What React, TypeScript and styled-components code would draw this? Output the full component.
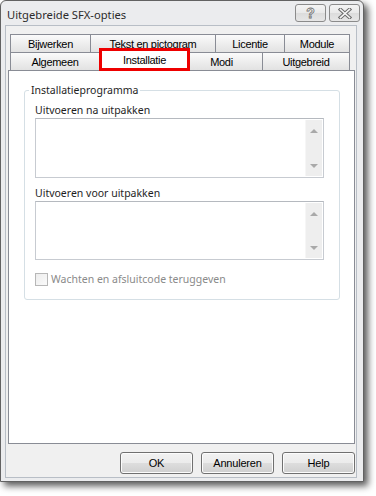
import styled, { createGlobalStyle } from 'styled-components'

const GlobalStyle = createGlobalStyle`
    html, body {
        margin: 0;
        padding: 0;
        background: #ffffff;
    }
    body {
        font-family: 'Noto Sans', 'Liberation Sans', sans-serif;
    }
`

const Page = styled.div`
    width: 376px;
    height: 496px;
    background: #ffffff;
`

const Window = styled.div`
    width: 362px;
    height: 480px;
    border: 1px solid #626262;
    border-radius: 6px 6px 0 0;
    background: #ebecee;
    box-shadow: 4px 4px 7px rgba(0, 0, 0, 0.65);
    display: flex;
    flex-direction: column;
`

const TitleBar = styled.div`
    height: 24px;
    display: flex;
    align-items: center;
    padding: 0 3px 0 6px;
`

const Title = styled.span`
    flex: 1;
    font-family: 'Noto Sans', sans-serif;
    font-size: 11.2px;
    color: #2b2b2b;
    margin-top: 2px;
`

const CaptionButtons = styled.div`
    display: flex;
    gap: 3px;
    align-self: flex-start;
    margin-top: 3px;
`

const CaptionButton = styled.div`
    width: 29px;
    height: 16px;
    border: 1px solid #8b8b8b;
    border-radius: 3px;
    background: linear-gradient(#f4f4f4, #e9e9e9 50%, #dcdcdc 51%, #e6e6e6);
    display: flex;
    align-items: center;
    justify-content: center;
`

const HelpGlyph = styled.span`
    font-family: 'Liberation Sans', sans-serif;
    font-weight: bold;
    font-size: 14px;
    line-height: 14px;
    color: #f4f4f4;
    -webkit-text-stroke: 0.8px #707070;
`

const Client = styled.div`
    margin: 0 6px 3px 4px;
    flex: 1;
    border: 1px solid #b8bec6;
    background: #f0f0f0;
    padding: 8px 1px 3px 2px;
    display: flex;
    flex-direction: column;
`

const TabRow = styled.div`
    display: flex;
    height: 18px;
    padding-left: 2px;
`

const Tab = styled.div<{ $w: number }>`
    width: ${(p) => p.$w}px;
    margin-right: -1px;
    box-sizing: border-box;
    border: 1px solid #898c95;
    border-bottom: none;
    background: linear-gradient(#fbfbfb, #eeeeee 50%, #e2e2e2);
    font-family: 'Liberation Sans', sans-serif;
    font-size: 11px;
    letter-spacing: -0.3px;
    color: #000;
    display: flex;
    align-items: center;
    justify-content: center;
    padding-top: 1px;
`

const ActiveTab = styled.div<{ $w: number }>`
    width: ${(p) => p.$w}px;
    height: 23px;
    margin: -4px -10px -1px 0;
    box-sizing: border-box;
    border: 3px solid #ee0000;
    background: #ffffff;
    font-family: 'Liberation Sans', sans-serif;
    font-size: 11px;
    letter-spacing: -0.3px;
    color: #000;
    display: flex;
    justify-content: center;
    padding-top: 3px;
    position: relative;
    z-index: 1;
`

const Panel = styled.div`
    height: 374px;
    box-sizing: border-box;
    border: 1px solid #898c95;
    background: #ffffff;
    padding: 11px 14px 0 15px;
`

const GroupBox = styled.fieldset`
    margin: 0;
    height: 218px;
    box-sizing: border-box;
    border: 1px solid #d5dfe5;
    border-radius: 3px;
    padding: 0 15px 0 10px;
`

const Legend = styled.legend`
    font-family: 'Noto Sans', sans-serif;
    font-size: 10.5px;
    line-height: 16px;
    color: #1e1e1e;
    padding: 0 2px;
    margin-left: -6px;
`

const GroupBody = styled.div`
    display: flex;
    flex-direction: column;
`

const FieldLabel = styled.div<{ $top: number }>`
    font-family: 'Noto Sans', sans-serif;
    font-size: 10.5px;
    line-height: 15px;
    color: #1e1e1e;
    margin-top: ${(p) => p.$top}px;
`

const TextBox = styled.div<{ $h: number }>`
    height: ${(p) => p.$h}px;
    box-sizing: border-box;
    border: 1px solid #c7cbd1;
    border-top-color: #b5b9bf;
    background: #ffffff;
    display: flex;
    justify-content: flex-end;
    padding: 1px;
`

const ScrollBar = styled.div`
    width: 16px;
    background: #eeeeee;
    border-left: 1px solid #f6f6f6;
    display: flex;
    flex-direction: column;
    justify-content: space-between;
    align-items: center;
    padding: 9px 0 8px;
`

const Arrow = styled.div<{ $dir: 'up' | 'down' }>`
    width: 0;
    height: 0;
    border-left: 4px solid transparent;
    border-right: 4px solid transparent;
    ${(p) =>
        p.$dir === 'up'
            ? 'border-bottom: 4px solid #a9a9a9;'
            : 'border-top: 4px solid #a9a9a9;'}
`

const CheckRow = styled.div`
    display: flex;
    align-items: center;
    gap: 3px;
    margin-top: 12px;
`

const CheckBox = styled.div`
    width: 13px;
    height: 13px;
    box-sizing: border-box;
    border: 1px solid #b7b7b7;
    background: linear-gradient(135deg, #ededed, #fafafa);
`

const CheckLabel = styled.span`
    font-family: 'Noto Sans', sans-serif;
    font-size: 10.5px;
    color: #8a8a8a;
`

const ButtonRow = styled.div`
    display: flex;
    justify-content: flex-end;
    gap: 8px;
    margin-top: 8px;
`

const Button = styled.div`
    width: 73px;
    height: 22px;
    box-sizing: border-box;
    border: 1px solid #707070;
    border-radius: 3px;
    background: linear-gradient(#f2f2f2, #ebebeb 50%, #dddddd 51%, #cfcfcf);
    box-shadow: inset 0 0 0 1px #fcfcfc;
    font-family: 'Liberation Sans', sans-serif;
    font-size: 11px;
    letter-spacing: -0.2px;
    color: #000;
    display: flex;
    align-items: center;
    justify-content: center;
`

const topTabs = [
    { label: 'Bijwerken', w: 81 },
    { label: 'Tekst en pictogram', w: 126 },
    { label: 'Licentie', w: 70 },
    { label: 'Module', w: 66 },
]

function CloseGlyph() {
    return (
        <svg width="14" height="11" viewBox="0 0 14 11">
            <path d="M2.5 1.5 L11.5 9.5 M11.5 1.5 L2.5 9.5" stroke="#6a6a6a" strokeWidth="3.6" strokeLinecap="square" />
            <path d="M2.5 1.5 L11.5 9.5 M11.5 1.5 L2.5 9.5" stroke="#f6f6f6" strokeWidth="1.6" strokeLinecap="square" />
        </svg>
    )
}

function ScrollText(props: { height: number }) {
    return (
        <TextBox $h={props.height}>
            <ScrollBar>
                <Arrow $dir="up" />
                <Arrow $dir="down" />
            </ScrollBar>
        </TextBox>
    )
}

export default function App() {
    return (
        <Page>
            <GlobalStyle />
            <Window>
                <TitleBar>
                    <Title>Uitgebreide SFX-opties</Title>
                    <CaptionButtons>
                        <CaptionButton>
                            <HelpGlyph>?</HelpGlyph>
                        </CaptionButton>
                        <CaptionButton>
                            <CloseGlyph />
                        </CaptionButton>
                    </CaptionButtons>
                </TitleBar>
                <Client>
                    <TabRow>
                        {topTabs.map((t) => (
                            <Tab key={t.label} $w={t.w}>
                                {t.label}
                            </Tab>
                        ))}
                    </TabRow>
                    <TabRow>
                        <Tab $w={90}>Algemeen</Tab>
                        <ActiveTab $w={91}>Installatie</ActiveTab>
                        <Tab $w={83}>Modi</Tab>
                        <Tab $w={88}>Uitgebreid</Tab>
                    </TabRow>
                    <Panel>
                        <GroupBox>
                            <Legend>Installatieprogramma</Legend>
                            <GroupBody>
                                <FieldLabel $top={5}>Uitvoeren na uitpakken</FieldLabel>
                                <ScrollText height={60} />
                                <FieldLabel $top={8}>Uitvoeren voor uitpakken</FieldLabel>
                                <ScrollText height={59} />
                                <CheckRow>
                                    <CheckBox />
                                    <CheckLabel>Wachten en afsluitcode teruggeven</CheckLabel>
                                </CheckRow>
                            </GroupBody>
                        </GroupBox>
                    </Panel>
                    <ButtonRow>
                        <Button>OK</Button>
                        <Button>Annuleren</Button>
                        <Button>Help</Button>
                    </ButtonRow>
                </Client>
            </Window>
        </Page>
    )
}
